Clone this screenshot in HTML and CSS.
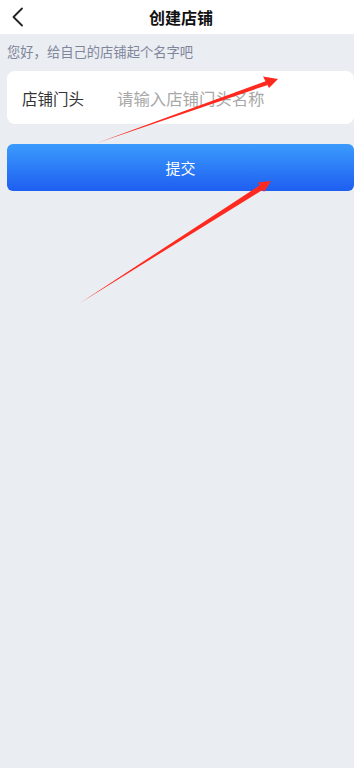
FILE: index.html
```html
<!DOCTYPE html>
<html lang="zh">
<head>
<meta charset="utf-8">
<link rel="stylesheet" href="styles.css">
</head>
<body>
<header class="nav">
  <svg class="back" width="14" height="20" viewBox="0 0 14 20"><path d="M11 1.5 L2.5 10 L11 18.5" fill="none" stroke="#222" stroke-width="1.8" stroke-linecap="round" stroke-linejoin="round"/></svg>
  <h1 class="title">创建店铺</h1>
</header>
<main class="content">
  <p class="hint">您好，给自己的店铺起个名字吧</p>
  <div class="card">
    <span class="label">店铺门头</span>
    <span class="placeholder">请输入店铺门头名称</span>
  </div>
  <button class="submit">提交</button>
</main>
<svg class="arrows" width="354" height="768" viewBox="0 0 354 768">
  <polygon points="97,143 267.7,84.9 266.3,81.1" fill="#ff2a1f"/>
  <polygon points="278,79 263,76.5 269,88" fill="#ff2a1f"/>
  <polygon points="80,303 263.3,189.4 260.5,184.7" fill="#ff2a1f"/>
  <polygon points="271,181 258,182.5 264,192" fill="#ff2a1f"/>
</svg>
</body>
</html>
```
FILE: styles.css
```css
* { box-sizing: border-box; }
html, body { margin: 0; padding: 0; }
body {
  width: 354px;
  min-height: 768px;
  background: #eaedf1;
  font-family: "Noto Sans CJK SC", "Noto Sans", sans-serif;
  position: relative;
}
.nav {
  height: 34px;
  background: #fff;
  position: relative;
  display: flex;
  align-items: center;
  justify-content: center;
  padding-left: 8px;
}
.back {
  position: absolute;
  left: 11px;
  top: 7px;
}
.title {
  margin: 0;
  font-size: 16px;
  font-weight: 700;
  color: #111;
  line-height: 34px;
}
.content {
  padding: 0 0 0 7px;
}
.hint {
  margin: 0;
  padding-top: 9px;
  height: 37px;
  font-size: 13.3px;
  line-height: 18px;
  color: #7f869c;
}
.card {
  height: 53px;
  background: #fff;
  border-radius: 8px;
  display: flex;
  align-items: center;
  padding-left: 15px;
}
.label {
  font-size: 15.5px;
  color: #333;
  width: 95px;
}
.placeholder {
  font-size: 16.4px;
  color: #a8a8a8;
}
.submit {
  display: block;
  width: 347px;
  height: 47px;
  margin-top: 20px;
  border: none;
  border-radius: 6px;
  background: linear-gradient(#3b9bfd, #1e5ef0);
  color: #fff;
  font-family: inherit;
  font-size: 15px;
  padding: 0;
}
.arrows {
  position: absolute;
  left: 0;
  top: 0;
  pointer-events: none;
}
```
